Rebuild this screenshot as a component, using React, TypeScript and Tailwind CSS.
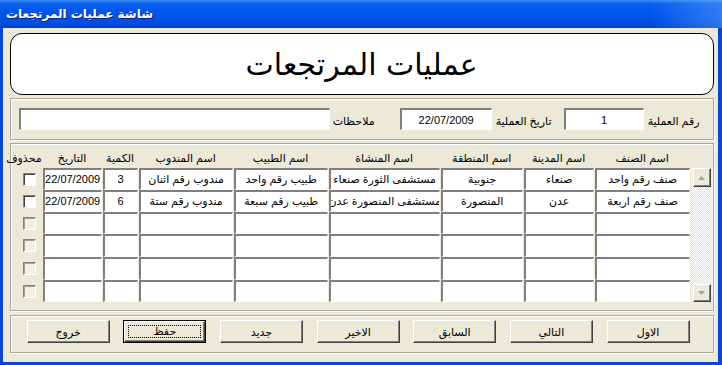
import React from "react";

const cols = [
  { key: "date", label: "التاريخ", w: "w-[59px]" },
  { key: "qty", label: "الكمية", w: "w-[35px]" },
  { key: "rep", label: "اسم المندوب", w: "w-[94px]" },
  { key: "doc", label: "اسم الطبيب", w: "w-[94px]" },
  { key: "fac", label: "اسم المنشاة", w: "w-[111px]" },
  { key: "region", label: "اسم المنطقة", w: "w-[82px]" },
  { key: "city", label: "اسم المدينة", w: "w-[70px]" },
  { key: "item", label: "اسم الصنف", w: "w-[95px]" },
];

const rows: { h: string; data?: Record<string, string> }[] = [
  {
    h: "h-[22px]",
    data: {
      date: "22/07/2009",
      qty: "3",
      rep: "مندوب رقم اثنان",
      doc: "طبيب رقم واحد",
      fac: "مستشفى الثورة صنعاء",
      region: "جنوبية",
      city: "صنعاء",
      item: "صنف رقم واحد",
    },
  },
  {
    h: "h-[22px]",
    data: {
      date: "22/07/2009",
      qty: "6",
      rep: "مندوب رقم ستة",
      doc: "طبيب رقم سبعة",
      fac: "مستشفى المنصورة عدن",
      region: "المنصورة",
      city: "عدن",
      item: "صنف رقم اربعة",
    },
  },
  { h: "h-[22px]" },
  { h: "h-[23px]" },
  { h: "h-[23px]" },
  { h: "h-[22px]" },
];

const buttons = ["خروج", "حفظ", "جديد", "الاخير", "السابق", "التالي", "الاول"];

const sunken =
  "border-t-2 border-l-2 border-t-[#808080] border-l-[#808080] border-b border-r border-b-white border-r-white bg-white";
const etched =
  "border border-[#ACA899] shadow-[inset_1px_1px_0_#ffffff,1px_1px_0_#ffffff]";
const raised =
  "bg-[#ECE9D8] border-t border-l border-t-white border-l-white border-b border-r border-b-[#404040] border-r-[#404040] shadow-[inset_-1px_-1px_0_#808080]";

function Arrow({ up }: { up?: boolean }) {
  return (
    <svg width="7" height="4" viewBox="0 0 7 4">
      <polygon points={up ? "3.5,0 7,4 0,4" : "0,0 7,0 3.5,4"} fill="#A3A3A3" />
    </svg>
  );
}

export default function App() {
  return (
    <div className="w-[722px] h-[365px] flex flex-col overflow-hidden font-['Liberation_Sans','DejaVu_Sans',sans-serif] text-black">
      {/* title bar */}
      <div className="h-[28px] flex items-center pl-[6px] bg-[linear-gradient(to_right,transparent_90%,rgba(110,170,255,0.45)),linear-gradient(to_bottom,#3D8FF8_0%,#0B5FEB_12%,#0058EE_35%,#0054E6_65%,#004AD8_88%,#0040C8_100%)]">
        <span
          dir="rtl"
          className="text-white font-bold text-[12px] [text-shadow:1px_1px_0_#0A2080] font-['DejaVu_Sans',sans-serif]"
        >
          شاشة عمليات المرتجعات
        </span>
      </div>

      <div className="flex flex-1 min-h-0">
        <div className="w-[3px] bg-[#0A45DB]" />
        <div className="flex-1 bg-[#ECE9D8] flex flex-col pl-[7px] pr-[4px] pt-[5px]">
          {/* header */}
          <div className="h-[62px] rounded-[12px] border border-black bg-white flex items-center justify-center">
            <span dir="rtl" className="text-[30px] font-['DejaVu_Sans',sans-serif] leading-none pt-[2px]">
              عمليات المرتجعات
            </span>
          </div>

          {/* info */}
          <div className={`mt-[3px] h-[42px] ${etched} flex items-start pl-[8px] pt-[9px] text-[11px]`}>
            <div className={`w-[311px] h-[22px] ${sunken}`} />
            <div dir="rtl" className="w-[70px] pl-[3px] text-left pt-[5px]">ملاحظات</div>
            <div className={`w-[92px] h-[22px] ${sunken} flex justify-center pt-[2px]`}>22/07/2009</div>
            <div dir="rtl" className="w-[72px] pl-[4px] text-left pt-[5px]">تاريخ العملية</div>
            <div className={`w-[80px] h-[22px] ${sunken} flex justify-center pt-[2px]`}>1</div>
            <div dir="rtl" className="pl-[4px] text-left pt-[5px]">رقم العملية</div>
          </div>

          {/* grid */}
          <div className={`mt-[3px] h-[168px] ${etched} pl-px text-[11px]`}>
            <div className="h-[24px] pt-[4px] flex items-center gap-px">
              <div dir="rtl" className="w-[30px] text-center whitespace-nowrap">محذوف</div>
              {cols.map((c) => (
                <div key={c.key} dir="rtl" className={`${c.w} text-center whitespace-nowrap`}>
                  {c.label}
                </div>
              ))}
            </div>
            <div className="flex">
              <div className="flex flex-col">
                {rows.map((r, i) => (
                  <div key={i} className={`${r.h} flex gap-px`}>
                    <div className="w-[30px] pl-[11px] flex items-center">
                      <div
                        className={`w-[13px] h-[13px] border border-t-[#808080] border-l-[#808080] border-b-white border-r-white ${
                          r.data
                            ? "bg-white shadow-[inset_1px_1px_0_#404040]"
                            : "bg-[#F2F0E6] shadow-[inset_1px_1px_0_#A0A0A0]"
                        }`}
                      />
                    </div>
                    {cols.map((c) => (
                      <div
                        key={c.key}
                        className={`${c.w} h-full ${sunken} flex items-center justify-center overflow-hidden whitespace-nowrap`}
                      >
                        <span dir="rtl" className="pb-px">
                          {r.data ? r.data[c.key] : ""}
                        </span>
                      </div>
                    ))}
                  </div>
                ))}
              </div>
              <div className="ml-px w-[22px] h-[134px] flex flex-col items-center justify-between bg-[repeating-conic-gradient(#ffffff_0_25%,#E4E1D3_0_50%)] bg-[length:2px_2px]">
                <div className={`w-[18px] h-[19px] ${raised} flex items-center justify-center`}>
                  <Arrow up />
                </div>
                <div className={`w-[18px] h-[18px] ${raised} flex items-center justify-center`}>
                  <Arrow />
                </div>
              </div>
            </div>
          </div>

          {/* buttons */}
          <div className={`mt-[4px] h-[38px] ${etched} flex items-start justify-between pl-[16px] pr-[23px] pt-[4px] text-[11px]`}>
            {buttons.map((b) =>
              b === "حفظ" ? (
                <div key={b} className="w-[83px] h-[23px] border border-black">
                  <div className={`w-full h-full ${raised} p-[3px]`}>
                    <div className="w-full h-full border border-dotted border-black flex items-center justify-center">
                      <span dir="rtl">{b}</span>
                    </div>
                  </div>
                </div>
              ) : (
                <div key={b} className={`w-[83px] h-[23px] ${raised} flex items-center justify-center`}>
                  <span dir="rtl" className="pt-px">{b}</span>
                </div>
              )
            )}
          </div>
        </div>
        <div className="w-[5px] bg-[#0A45DB]" />
      </div>
      <div className="h-[3px] bg-[#0A45DB]" />
    </div>
  );
}
